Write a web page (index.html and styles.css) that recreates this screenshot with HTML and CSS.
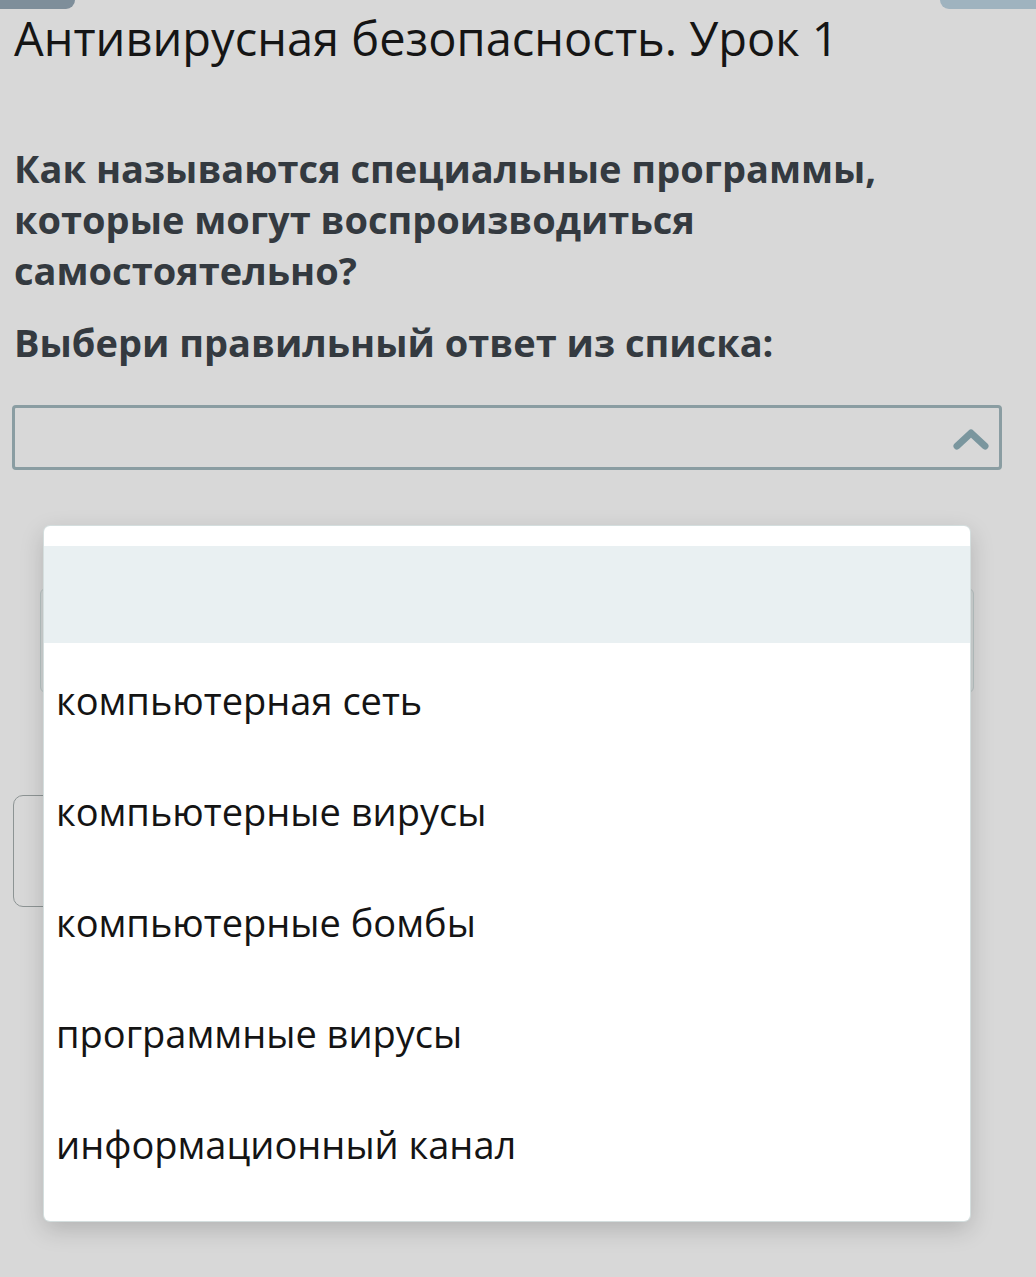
FILE: index.html
```html
<!DOCTYPE html>
<html lang="ru">
<head>
<meta charset="UTF-8">
<meta name="viewport" content="width=device-width, initial-scale=1.0">
<title>Антивирусная безопасность. Урок 1</title>
<link rel="stylesheet" href="styles.css">
</head>

<body>
    <div class="tab tab-left"></div>
    <div class="tab tab-right"></div>

    <div class="page">
        <h1 class="lesson-title">Антивирусная безопасность. Урок 1</h1>

        <p class="question">Как называются специальные программы, которые могут воспроизводиться самостоятельно?</p>
        <p class="hint">Выбери правильный ответ из списка:</p>

        <div class="select">
            <svg class="chevron" width="36" height="26" viewBox="0 0 36 26">
                <polyline points="4,21 18,8 32,21" fill="none" stroke="#7a969e" stroke-width="7" stroke-linecap="round" stroke-linejoin="round"/>
            </svg>
        </div>

        <div class="check-button"></div>
        <div class="next-button"></div>

        <!-- открытый список -->
        <ul class="dropdown">
            <li class="option option-empty"></li>
            <li class="option">компьютерная сеть</li>
            <li class="option">компьютерные вирусы</li>
            <li class="option">компьютерные бомбы</li>
            <li class="option">программные вирусы</li>
            <li class="option">информационный канал</li>
        </ul>
    </div>
</body>

</html>
```

FILE: styles.css
```css
body {
    margin: 0;
    background-color: #d8d8d8;
    font-family: "Open Sans", "Noto Sans", sans-serif;
    height: 1277px;
    overflow: hidden;
    position: relative;
}

.tab {
    position: absolute;
    top: 0;
    height: 9px;
}

.tab-left {
    left: 0;
    width: 75px;
    background-color: #7e8e9a;
    border-bottom-right-radius: 10px;
}

.tab-right {
    right: 0;
    width: 96px;
    background-color: #9fb3bf;
    border-bottom-left-radius: 10px;
}

.page {
    position: relative;
    padding: 11px 34px 0 12px;
}

.lesson-title {
    margin: 0 0 77px 2px;
    font-size: 47px;
    line-height: 55px;
    font-weight: 400;
    color: #151515;
}

.question,
.hint {
    margin: 0 0 0 2px;
    font-size: 38px;
    line-height: 51px;
    font-weight: 700;
    color: #343a40;
}

.question {
    max-width: 900px;
}

.hint {
    margin-top: 21px;
    margin-bottom: 37px;
}

.select {
    height: 59px;
    border: 3px solid #8a9da2;
    border-radius: 4px;
    display: flex;
    justify-content: flex-end;
    align-items: center;
    padding-right: 10px;
}

.chevron {
    display: block;
}

.check-button {
    margin: 118px 28px 0 28px;
    height: 103px;
    border: 1px solid #b9c3c3;
    border-radius: 6px;
    background-color: #d2d6d6;
}

.next-button {
    margin: 102px 0 0 1px;
    width: 200px;
    height: 110px;
    border: 1.5px solid #8d9494;
    border-radius: 10px;
}

.dropdown {
    position: absolute;
    left: 44px;
    top: 526px;
    width: 926px;
    margin: 0;
    padding: 20px 0 23px;
    list-style: none;
    background-color: #fff;
    border-radius: 6px;
    box-shadow: 0 0 0 1px #d4dede, 0 8px 24px rgba(0, 0, 0, 0.18);
}

.option {
    height: 111px;
    line-height: 115px;
    padding-left: 12px;
    font-size: 38px;
    color: #141414;
    white-space: nowrap;
}

.option-empty {
    height: 97px;
    background-color: #e9f0f2;
}
```
